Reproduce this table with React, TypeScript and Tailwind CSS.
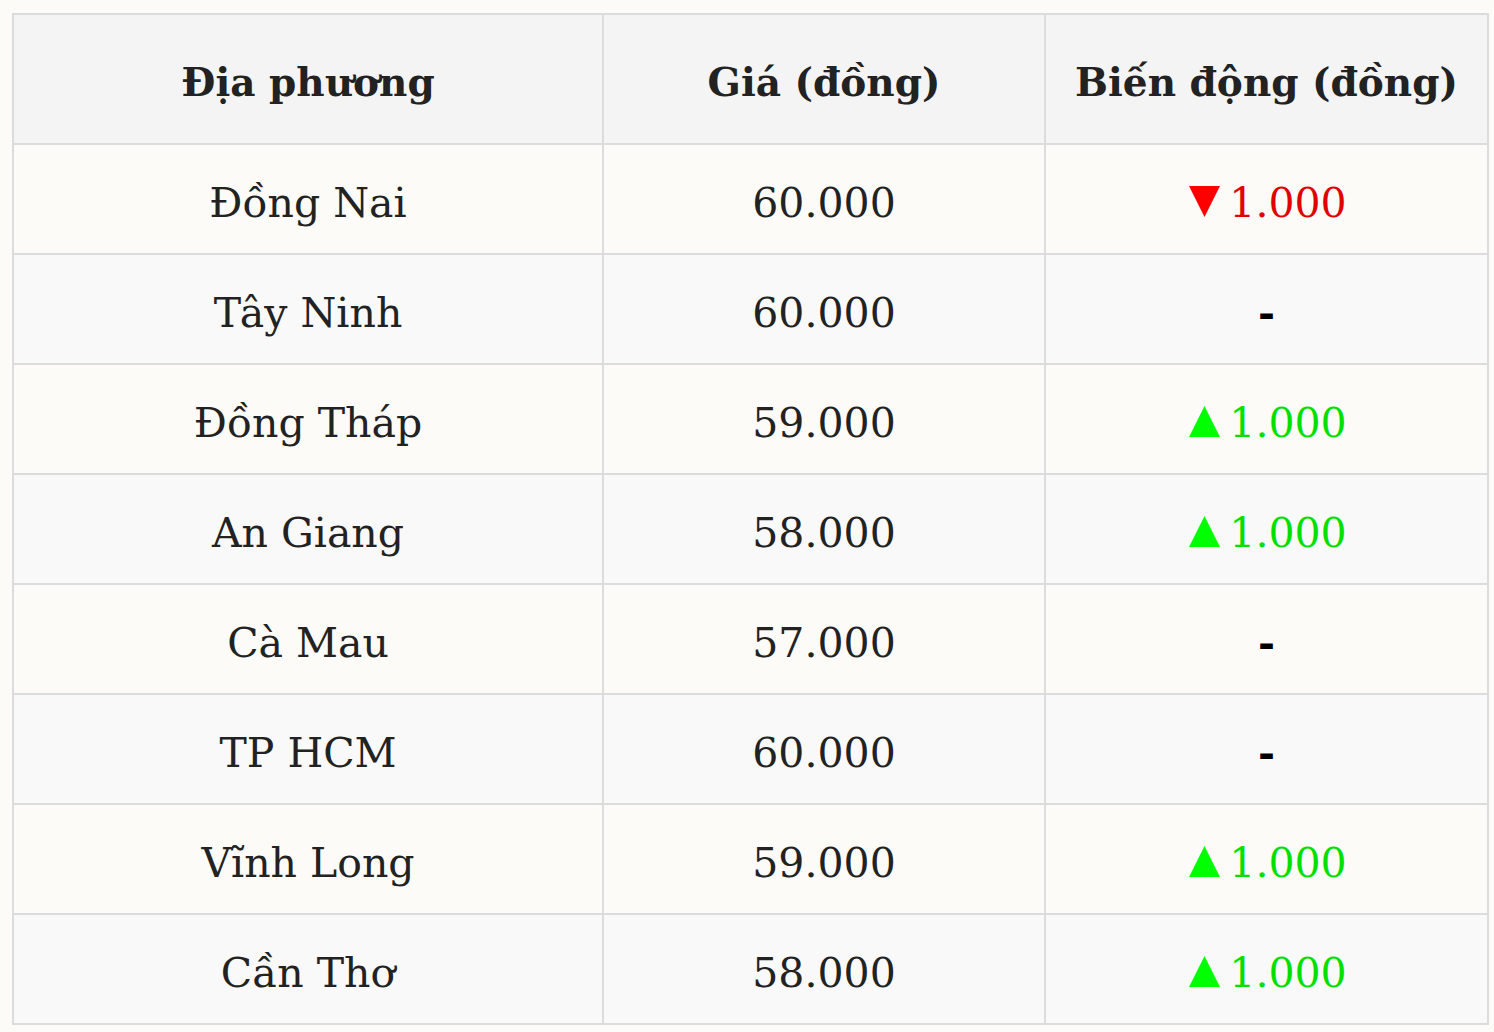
import React from "react";

type Row = { place: string; price: string; change: "up" | "down" | "none" };

const ROWS: Row[] = [
  { place: "Đồng Nai", price: "60.000", change: "down" },
  { place: "Tây Ninh", price: "60.000", change: "none" },
  { place: "Đồng Tháp", price: "59.000", change: "up" },
  { place: "An Giang", price: "58.000", change: "up" },
  { place: "Cà Mau", price: "57.000", change: "none" },
  { place: "TP HCM", price: "60.000", change: "none" },
  { place: "Vĩnh Long", price: "59.000", change: "up" },
  { place: "Cần Thơ", price: "58.000", change: "up" },
];

function Triangle({ up }: { up: boolean }) {
  return (
    <svg viewBox="0 0 31 31" className="mr-[9px] inline-block h-[31px] w-[31px] align-baseline">
      {up ? <polygon points="0,31 15.5,0 31,31" fill="#00ff00" /> : <polygon points="0,0 31,0 15.5,31" fill="#ff0000" />}
    </svg>
  );
}

function Change({ change }: { change: Row["change"] }) {
  if (change === "down")
    return (
      <span className="pl-[3px] text-[#e00000]">
        <Triangle up={false} />
        1.000
      </span>
    );
  if (change === "up")
    return (
      <span className="pl-[3px] text-[#00e000]">
        <Triangle up />
        1.000
      </span>
    );
  return <span className="font-semibold text-black">-</span>;
}

export default function App() {
  return (
    <div className="min-h-screen bg-[#fcfbf8] pt-[13px] pl-[12px]" style={{ fontFamily: '"DejaVu Serif", "Liberation Serif", serif' }}>
      <table className="w-[1475px] table-fixed border-collapse text-[#222222]">
        <colgroup>
          <col className="w-[590px]" />
          <col className="w-[442px]" />
          <col className="w-[443px]" />
        </colgroup>
        <thead>
          <tr className="h-[130px] bg-[#f4f4f4] text-[39px] font-bold">
            <th className="border-2 border-[#dcdcdc] pt-[6px] text-center">Địa phương</th>
            <th className="border-2 border-[#dcdcdc] pt-[6px] text-center">Giá (đồng)</th>
            <th className="border-2 border-[#dcdcdc] pt-[6px] text-center">Biến động (đồng)</th>
          </tr>
        </thead>
        <tbody>
          {ROWS.map((r, i) => (
            <tr key={r.place} className={`h-[110px] text-[41px] ${i % 2 === 0 ? "bg-[#fcfbf8]" : "bg-[#f9f9f9]"}`}>
              <td className="border-2 border-[#dcdcdc] pt-[9px] text-center">{r.place}</td>
              <td className="border-2 border-[#dcdcdc] pt-[9px] text-center">{r.price}</td>
              <td className="border-2 border-[#dcdcdc] pt-[9px] text-center">
                <Change change={r.change} />
              </td>
            </tr>
          ))}
        </tbody>
      </table>
    </div>
  );
}
